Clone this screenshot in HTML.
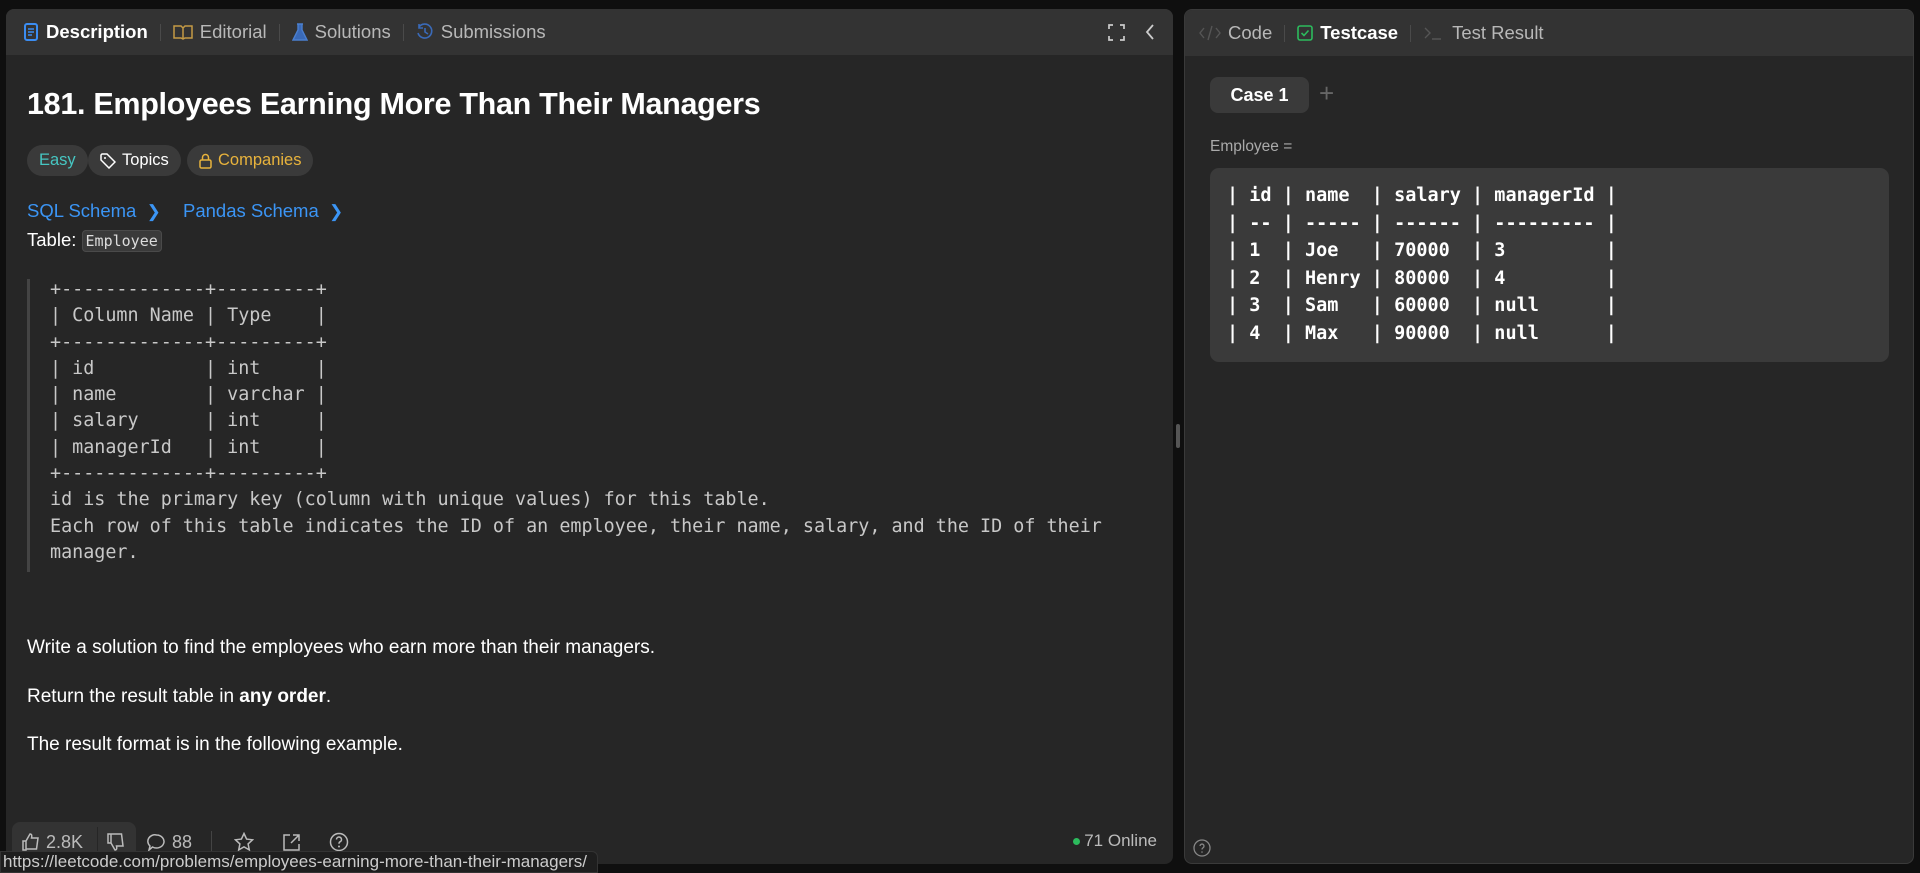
<!DOCTYPE html>
<html><head><meta charset="utf-8">
<style>
*{box-sizing:border-box;margin:0;padding:0}
body{width:1920px;height:869px;background:#0f0f0f;font-family:"Liberation Sans",sans-serif;color:#eee;position:relative;overflow:hidden}
.panel{position:absolute;background:#262626;border-radius:8px;overflow:hidden}
.hdr{position:absolute;left:0;right:0;top:0;height:46px;background:#333;display:flex;align-items:center;font-size:18.5px;color:#b8b8b8}
.tab{display:flex;align-items:center;gap:7px}
.sep{width:1px;height:17px;background:#4a4a4a;margin:0 12px}
.mono{font-family:"DejaVu Sans Mono","Liberation Mono",monospace}
svg{display:block}
.pill{position:absolute;height:31px;border-radius:16px;background:#3a3a3a;display:flex;align-items:center;padding:0 12px;font-size:16.5px;gap:6px}
.p{position:absolute;left:21px;font-size:19px;color:#fff;line-height:24px}
</style></head><body>

<div class="panel" style="left:6px;top:9px;width:1167px;height:855px">
  <div class="hdr" style="padding-left:17px">
    <div class="tab" style="color:#fff;font-weight:bold">
      <svg width="16" height="18" viewBox="0 0 16 18"><rect x="2" y="1" width="12" height="16" rx="2" fill="none" stroke="#3b8df2" stroke-width="2"/><path d="M5 6h6M5 9h6M5 12h4" stroke="#3b8df2" stroke-width="1.6"/></svg>Description</div>
    <div class="sep"></div>
    <div class="tab"><svg width="20" height="16" viewBox="0 0 20 16"><path d="M1 2h7l2 2 2-2h7v12h-7l-2 1-2-1H1z M10 4v11" fill="none" stroke="#c49a45" stroke-width="1.5"/></svg>Editorial</div>
    <div class="sep"></div>
    <div class="tab"><svg width="16" height="18" viewBox="0 0 16 18"><path d="M5 1h6M6 1v6L1 17h14L10 7V1" fill="#3a6ab8" stroke="#4a7fd0" stroke-width="1.4"/></svg>Solutions</div>
    <div class="sep"></div>
    <div class="tab"><svg width="18" height="18" viewBox="0 0 18 18"><path d="M3 4a7 7 0 1 1-1 6M3 1v4h4M9 5v4l3 2" fill="none" stroke="#3a6ab8" stroke-width="1.6"/></svg>Submissions</div>
    <div style="position:absolute;right:48px;top:15px"><svg width="17" height="17" viewBox="0 0 17 17"><path d="M1 5V1h4M12 1h4v4M16 12v4h-4M5 16H1v-4" fill="none" stroke="#ccc" stroke-width="1.7"/></svg></div>
    <div style="position:absolute;right:18px;top:14px"><svg width="10" height="18" viewBox="0 0 10 18"><path d="M8 2L2 9l6 7" fill="none" stroke="#ccc" stroke-width="1.8"/></svg></div>
  </div>

  <div style="position:absolute;left:21px;top:78px;font-size:30.5px;font-weight:bold;color:#fff;letter-spacing:-0.3px">181. Employees Earning More Than Their Managers</div>

  <div class="pill" style="left:21px;top:136px;color:#46c6c2">Easy</div>
  <div class="pill" style="left:82px;top:136px;color:#fff"><svg width="16" height="16" viewBox="0 0 16 16"><path d="M1 2v5l8 8 6-6-8-8H2z" fill="none" stroke="#fff" stroke-width="1.5"/><circle cx="5" cy="5" r="1" fill="#fff"/></svg>Topics</div>
  <div class="pill" style="left:181px;top:136px;color:#e8b33c"><svg width="13" height="16" viewBox="0 0 13 16"><rect x="1" y="7" width="11" height="8" rx="1.5" fill="none" stroke="#e8b33c" stroke-width="1.5"/><path d="M3.5 7V4.5a3 3 0 0 1 6 0V7" fill="none" stroke="#e8b33c" stroke-width="1.5"/></svg>Companies</div>

  <div style="position:absolute;left:21px;top:191px;font-size:18.5px;color:#3b95f5">SQL Schema &nbsp;<span style="font-size:17px">&#x276F;</span></div>
  <div style="position:absolute;left:177px;top:191px;font-size:18.5px;color:#3b95f5">Pandas Schema &nbsp;<span style="font-size:17px">&#x276F;</span></div>
  <div style="position:absolute;left:21px;top:220px;font-size:18.5px;color:#fff">Table: <span class="mono" style="font-size:15px;background:#3a3a3a;border:1px solid #4a4a4a;border-radius:4px;padding:1px 3px;color:#ddd">Employee</span></div>

  <div style="position:absolute;left:21px;top:270px;width:3px;height:293px;background:#444"></div>
  <pre class="mono" style="position:absolute;left:44px;top:268px;font-size:18.4px;line-height:26.3px;color:#c8c8c8">+-------------+---------+
| Column Name | Type    |
+-------------+---------+
| id          | int     |
| name        | varchar |
| salary      | int     |
| managerId   | int     |
+-------------+---------+
id is the primary key (column with unique values) for this table.
Each row of this table indicates the ID of an employee, their name, salary, and the ID of their
manager.</pre>

  <div class="p" style="top:627px">Write a solution to find the employees who earn more than their managers.</div>
  <div class="p" style="top:676px">Return the result table in <b>any order</b>.</div>
  <div class="p" style="top:724px">The result format is in the following example.</div>

  <div style="position:absolute;left:6px;top:813px;width:124px;height:40px;background:#333;border-radius:8px"></div>
  <div style="position:absolute;left:91px;top:818px;width:1px;height:30px;background:#262626"></div>
  <div style="position:absolute;left:16px;top:822px;display:flex;align-items:center;gap:6px;font-size:18px;color:#bbb">
    <svg width="18" height="18" viewBox="0 0 18 18"><path d="M1 8h3v9H1zM4 8l4-7c2 0 2 2 1.5 4H16l-1.5 11H4" fill="none" stroke="#bbb" stroke-width="1.5"/></svg>2.8K
    <span style="width:12px"></span>
    <svg width="18" height="18" viewBox="0 0 18 18"><path d="M1 1h3v9H1zM4 10l4 7c2 0 2-2 1.5-4H16L14.5 1H4" fill="none" stroke="#bbb" stroke-width="1.5"/></svg>
    <span style="width:10px"></span>
    <svg width="19" height="19" viewBox="0 0 19 19"><path d="M9.5 2a7.5 6.5 0 1 1-4 12L2 17l1-4A7 6.5 0 0 1 9.5 2z" fill="none" stroke="#bbb" stroke-width="1.5"/></svg>88
    <span style="width:14px;border-right:1px solid #444;height:22px"></span><span style="width:10px"></span>
    <svg width="20" height="20" viewBox="0 0 20 20"><path d="M10 1.5l2.6 5.6 6 .7-4.5 4.1 1.2 6L10 14.9 4.7 17.9l1.2-6L1.4 7.8l6-.7z" fill="none" stroke="#bbb" stroke-width="1.5"/></svg>
    <span style="width:16px"></span>
    <svg width="19" height="19" viewBox="0 0 19 19"><path d="M8 2H2v15h15v-6M11 2h6v6M17 2L9 10" fill="none" stroke="#bbb" stroke-width="1.5"/></svg>
    <span style="width:16px"></span>
    <svg width="20" height="20" viewBox="0 0 20 20"><circle cx="10" cy="10" r="8.5" fill="none" stroke="#bbb" stroke-width="1.5"/><path d="M7.5 7.5a2.5 2.5 0 1 1 3.5 2.3c-.8.4-1 1-1 2" fill="none" stroke="#bbb" stroke-width="1.5"/><circle cx="10" cy="14.5" r="1" fill="#bbb"/></svg>
  </div>
  <div style="position:absolute;right:16px;top:822px;font-size:17px;color:#bbb;display:flex;align-items:center;gap:4px"><span style="width:7px;height:7px;border-radius:50%;background:#2cbb5d"></span>71 Online</div>
</div>

<div style="position:absolute;left:1176px;top:424px;width:4px;height:24px;border-radius:2px;background:#555"></div>

<div class="panel" style="left:1184px;top:9px;width:730px;height:855px;border:1px solid #3a3a3a">
  <div class="hdr" style="padding-left:14px">
    <div class="tab"><svg width="22" height="16" viewBox="0 0 22 16"><path d="M5 3L1 8l4 5M17 3l4 5-4 5M13 1L9 15" fill="none" stroke="#555" stroke-width="1.4"/></svg>Code</div>
    <div class="sep"></div>
    <div class="tab" style="color:#fff;font-weight:bold"><svg width="16" height="16" viewBox="0 0 16 16"><rect x="1" y="1" width="14" height="14" rx="2" fill="none" stroke="#2cbb5d" stroke-width="1.6"/><path d="M4.5 8l2.5 2.5 4.5-5" fill="none" stroke="#2cbb5d" stroke-width="1.6"/></svg>Testcase</div>
    <div class="sep"></div>
    <div class="tab"><svg width="22" height="16" viewBox="0 0 22 16"><path d="M2 3l5 5-5 5M9 14h9" fill="none" stroke="#555" stroke-width="1.4"/></svg>Test Result</div>
  </div>
  <div style="position:absolute;left:25px;top:67px;width:99px;height:36px;border-radius:8px;background:#3a3a3a;color:#fff;font-size:18px;font-weight:bold;display:flex;align-items:center;justify-content:center">Case 1</div>
  <div style="position:absolute;left:134px;top:68px;font-size:26px;color:#666;font-weight:300">+</div>
  <div style="position:absolute;left:25px;top:128px;font-size:15.5px;color:#aaa">Employee =</div>
  <div style="position:absolute;left:25px;top:158px;width:679px;height:194px;border-radius:9px;background:#3a3a3a"></div>
  <pre class="mono" style="position:absolute;left:42px;top:172px;font-size:18.5px;line-height:27.6px;color:#fff;font-weight:bold">| id | name  | salary | managerId |
| -- | ----- | ------ | --------- |
| 1  | Joe   | 70000  | 3         |
| 2  | Henry | 80000  | 4         |
| 3  | Sam   | 60000  | null      |
| 4  | Max   | 90000  | null      |</pre>
  <div style="position:absolute;left:8px;top:829px"><svg width="18" height="18" viewBox="0 0 18 18"><circle cx="9" cy="9" r="8" fill="none" stroke="#888" stroke-width="1.3"/><path d="M7 7a2 2 0 1 1 3 1.8c-.7.4-1 .8-1 1.7" fill="none" stroke="#888" stroke-width="1.3"/><circle cx="9" cy="13" r=".8" fill="#888"/></svg></div>
</div>

<div style="position:absolute;left:0;top:851px;width:598px;height:22px;background:#1e1e1e;border:1px solid #333;border-radius:0 6px 0 0;font-size:17px;color:#ccc;padding-left:2px;line-height:20px;white-space:nowrap;overflow:hidden">https://leetcode.com/problems/employees-earning-more-than-their-managers/</div>
</body></html>
